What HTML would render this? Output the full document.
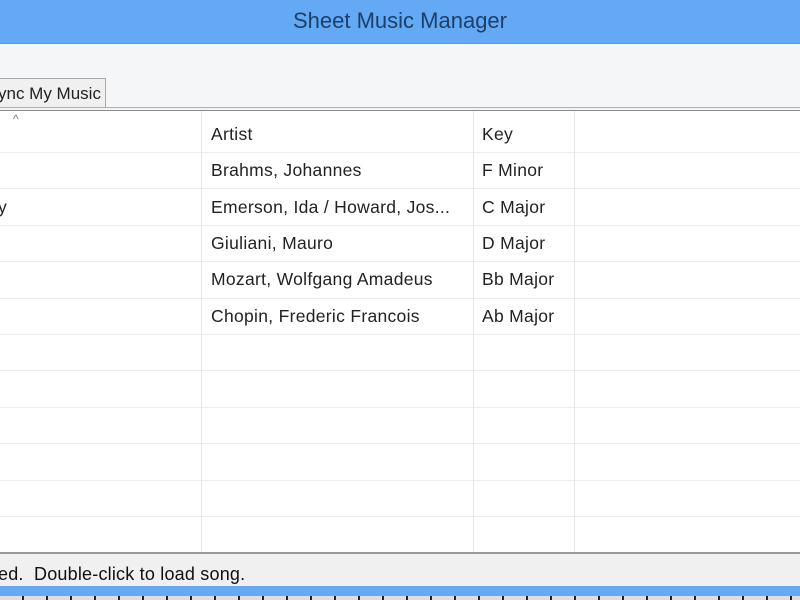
<!DOCTYPE html>
<html><head><style>
body{margin:0;width:800px;height:600px;overflow:hidden;background:#f2f4f6;font-family:"Liberation Sans",sans-serif;position:relative}
.title{position:absolute;left:0;top:0;width:800px;height:43px;background:#63a9f4;border-bottom:1px solid #5a9be0;text-align:center;line-height:42px;font-size:22px;color:#1d3f6c}
.tabbar{position:absolute;top:44px;left:0;width:800px;height:64px;background:#f4f6f7}
.tab{position:absolute;left:-4px;top:78px;width:110px;height:29px;border:1px solid #a8a8a8;border-bottom:none;background:#f0f0f0;font-size:17px;line-height:30px;color:#222;padding-left:1px;box-sizing:border-box}
.line{position:absolute;left:0;width:800px;top:107px;height:1px;background:#b0b0b0}
.line2{position:absolute;left:0;width:800px;top:110px;height:1px;background:#8c8c8c}
.grid{position:absolute;left:0;top:111px;width:800px;height:441px;background:#fff}
.h{position:absolute;left:0;width:800px;height:1px;background:#ececec}
.v{position:absolute;top:111px;height:441px;width:1px;background:#e6e6e6}
.t{position:absolute;font-size:17.5px;color:#222;white-space:nowrap;letter-spacing:0.3px}
.status{position:absolute;top:552px;left:0;width:800px;height:34px;background:#f0f0f0;border-top:2px solid #9a9a9a}
.status span{position:absolute;left:-2px;top:10px;font-size:18px;color:#111;letter-spacing:0.2px}
.blue{position:absolute;top:586px;left:0;width:800px;height:10px;background:#63a9f4}
.keys{position:absolute;top:596px;left:0;width:800px;height:4px;background:repeating-linear-gradient(90deg,#ddd 0 22px,#222 22px 24px)}
</style></head><body>
<div class="title">Sheet Music Manager</div>
<div class="tabbar"></div>
<div class="tab">ync My Music</div>
<div class="line"></div><div class="line2"></div>
<div class="grid"></div>
<div class="h" style="top:152px"></div>
<div class="h" style="top:188px"></div>
<div class="h" style="top:225px"></div>
<div class="h" style="top:261px"></div>
<div class="h" style="top:298px"></div>
<div class="h" style="top:334px"></div>
<div class="h" style="top:370px"></div>
<div class="h" style="top:407px"></div>
<div class="h" style="top:443px"></div>
<div class="h" style="top:480px"></div>
<div class="h" style="top:516px"></div>
<div class="v" style="left:201px"></div>
<div class="v" style="left:473px"></div>
<div class="v" style="left:574px"></div>
<div class="t" style="left:13px;top:112px;font-size:12px;color:#777">^</div>
<div class="t" style="left:211px;top:124px">Artist</div>
<div class="t" style="left:482px;top:124px">Key</div>
<div class="t" style="left:211px;top:160px">Brahms, Johannes</div>
<div class="t" style="left:482px;top:160px">F Minor</div>
<div class="t" style="left:-2px;top:197px">y</div>
<div class="t" style="left:211px;top:197px">Emerson, Ida / Howard, Jos...</div>
<div class="t" style="left:482px;top:197px">C Major</div>
<div class="t" style="left:211px;top:233px">Giuliani, Mauro</div>
<div class="t" style="left:482px;top:233px">D Major</div>
<div class="t" style="left:211px;top:269px">Mozart, Wolfgang Amadeus</div>
<div class="t" style="left:482px;top:269px">Bb Major</div>
<div class="t" style="left:211px;top:306px">Chopin, Frederic Francois</div>
<div class="t" style="left:482px;top:306px">Ab Major</div>
<div class="status"><span>ed.&nbsp; Double-click to load song.</span></div>
<div class="blue"></div>
<div class="keys"></div>
</body></html>
